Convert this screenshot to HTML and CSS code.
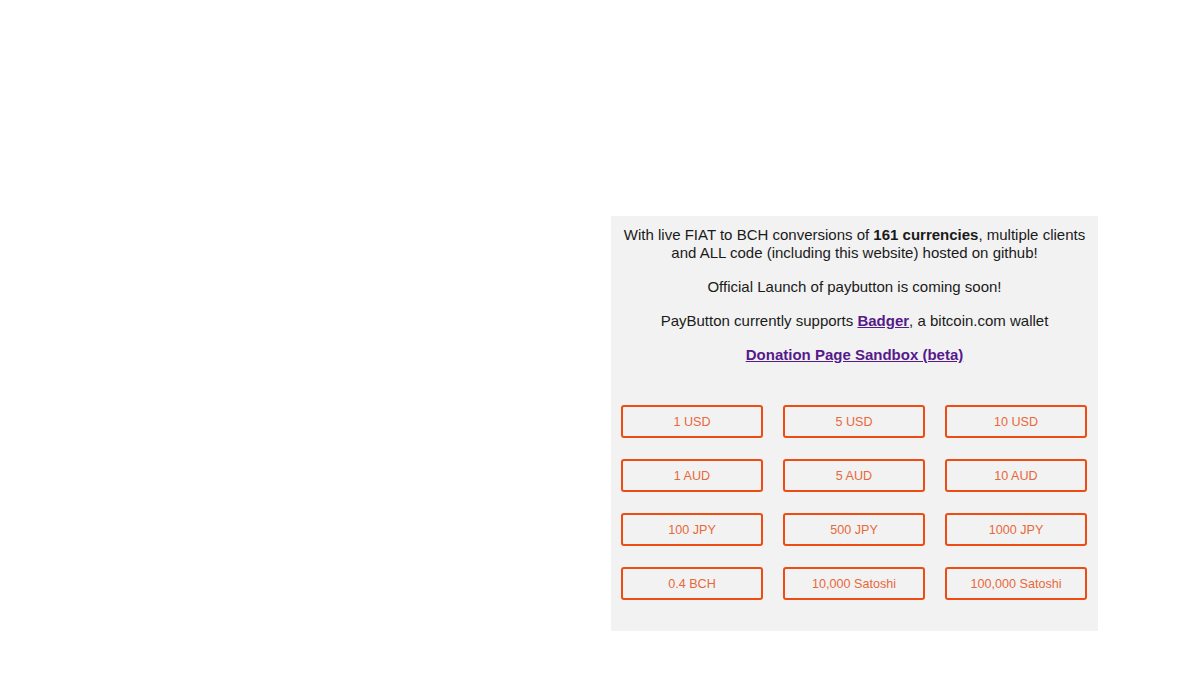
FILE: index.html
```html
<!DOCTYPE html>
<html lang="en">
<head>
    <meta charset="UTF-8">
    <meta name="viewport" content="width=device-width, initial-scale=1.0">
    <title>PayButton</title>
    <link rel="stylesheet" href="styles.css">
</head>
<body>
    <div class="layout">
        <div class="side"></div>

        <div class="panel">
            <p>With live FIAT to BCH conversions of <strong>161 currencies</strong>, multiple clients and ALL code (including this website) hosted on github!</p>
            <p>Official Launch of paybutton is coming soon!</p>
            <p>PayButton currently supports <a href="#badger">Badger</a>, a bitcoin.com wallet</p>
            <p><a href="#sandbox">Donation Page Sandbox (beta)</a></p>

            <!-- sample buttons -->
            <div class="buttons">
                <button class="pay">1 USD</button>
                <button class="pay">5 USD</button>
                <button class="pay">10 USD</button>
                <button class="pay">1 AUD</button>
                <button class="pay">5 AUD</button>
                <button class="pay">10 AUD</button>
                <button class="pay">100 JPY</button>
                <button class="pay">500 JPY</button>
                <button class="pay">1000 JPY</button>
                <button class="pay">0.4 BCH</button>
                <button class="pay">10,000 Satoshi</button>
                <button class="pay">100,000 Satoshi</button>
            </div>
        </div>
    </div>
</body>
</html>
```

FILE: styles.css
```css
body {
    margin: 0;
    font-family: "Liberation Sans", Arial, sans-serif;
    font-size: 15px;
    color: #1a1a1a;
    background: #fff;
}
.layout {
    display: grid;
    grid-template-columns: 600px 1fr;
    padding-top: 216px;
}
.panel {
    width: 487px;
    margin-left: 11px;
    box-sizing: border-box;
    padding: 10px 10px 31px;
    background: #f2f2f2;
    text-align: center;
}
.panel p {
    margin: 0 0 16px;
    line-height: 18px;
}
.panel a {
    color: #551a8b;
    font-weight: bold;
}
.buttons {
    display: grid;
    grid-template-columns: repeat(3, 142px);
    column-gap: 20px;
    row-gap: 21px;
    margin-top: 41px;
}
.pay {
    height: 33px;
    padding: 0;
    background: transparent;
    border: 2px solid #ee4c12;
    border-radius: 3px;
    color: #e8683a;
    font-family: "Liberation Sans", Arial, sans-serif;
    font-size: 12.6px;
    cursor: pointer;
}
.pay:hover {
    background: #fff3ee;
}
```
